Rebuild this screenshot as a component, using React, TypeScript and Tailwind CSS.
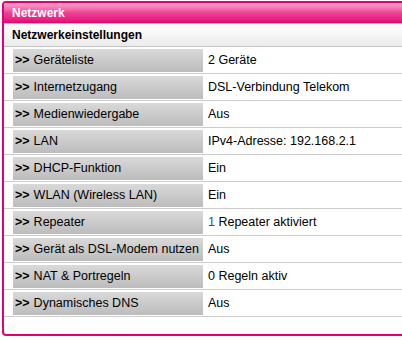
import React from "react";

const rows: { label: string; value: React.ReactNode }[] = [
  { label: "Geräteliste", value: "2 Geräte" },
  { label: "Internetzugang", value: "DSL-Verbindung Telekom" },
  { label: "Medienwiedergabe", value: "Aus" },
  { label: "LAN", value: "IPv4-Adresse: 192.168.2.1" },
  { label: "DHCP-Funktion", value: "Ein" },
  { label: "WLAN (Wireless LAN)", value: "Ein" },
  {
    label: "Repeater",
    value: (
      <span>
        <span className="text-[#1f4f9c]">1</span>{" "}Repeater aktiviert
      </span>
    ),
  },
  { label: "Gerät als DSL-Modem nutzen", value: "Aus" },
  { label: "NAT & Portregeln", value: "0 Regeln aktiv" },
  { label: "Dynamisches DNS", value: "Aus" },
];

export default function App() {
  return (
    <div
      className="w-[402px] h-[340px] overflow-hidden bg-white"
      style={{ fontFamily: '"Liberation Sans", Arial, sans-serif' }}
    >
      <div className="ml-[2px] mt-[1px] w-[430px] h-[335px] border-2 border-[#e20074] rounded-[4px] overflow-hidden flex flex-col">
        <div className="h-[20px] shrink-0 bg-gradient-to-b from-[#f7a3cd] via-[#ec3f96] to-[#e20074] text-white font-bold text-[12px] pl-[8px] flex items-center">
          Netzwerk
        </div>
        <div className="h-[24px] shrink-0 border-t border-b border-[#c4c4c4] bg-gradient-to-b from-white to-[#ebebeb] text-black font-bold text-[12px] pl-[8px] flex items-center">
          Netzwerkeinstellungen
        </div>
        {rows.map((r, i) => (
          <div
            key={i}
            className="flex items-stretch pl-[9px] pt-[2px] pb-[1px] border-b border-[#cdcdcd] text-[12.5px] text-black"
          >
            <div className="w-[190px] h-[23px] shrink-0 bg-gradient-to-b from-[#d9d9d9] to-[#bcbcbc] flex items-center pl-[2px] whitespace-nowrap">
              <span className="font-bold">&gt;&gt;</span>
              <span className="ml-[4px]">{r.label}</span>
            </div>
            <div className="flex items-center pl-[5px] whitespace-nowrap">
              <span>{r.value}</span>
            </div>
          </div>
        ))}
      </div>
    </div>
  );
}
